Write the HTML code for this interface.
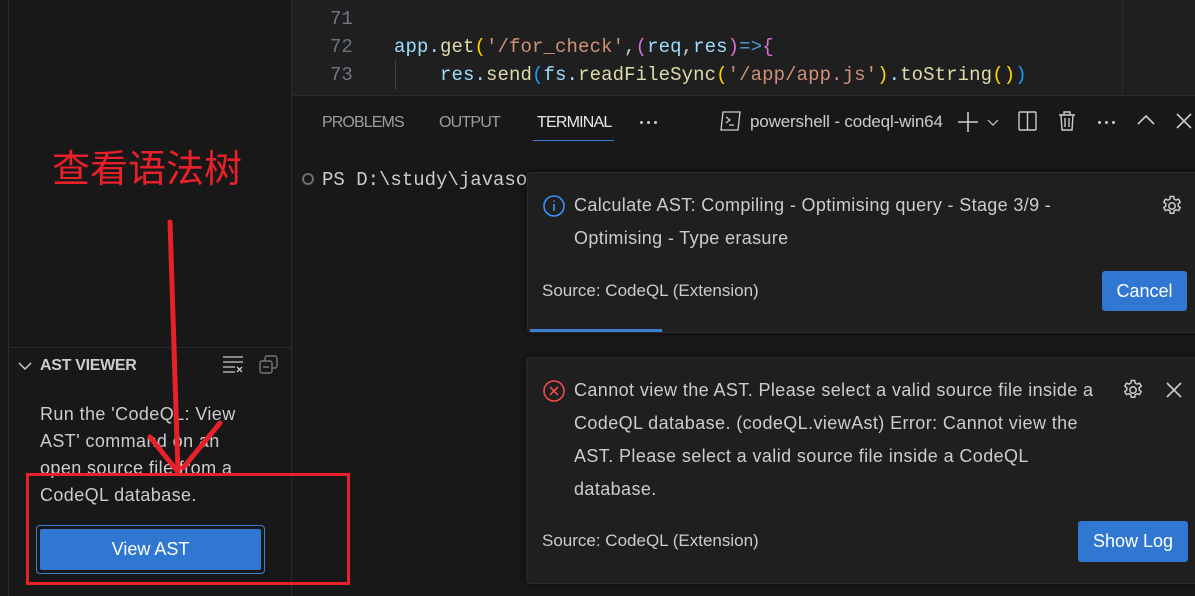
<!DOCTYPE html>
<html><head><meta charset="utf-8"><style>
*{margin:0;padding:0;box-sizing:border-box}
body{width:1195px;height:596px;overflow:hidden;background:#181818;font-family:"Liberation Sans","Noto Sans CJK SC",sans-serif;color:#ccc;position:relative}
.a{position:absolute}
.mono{font-family:"Liberation Mono","DejaVu Sans Mono",monospace;font-size:19px;white-space:pre}
.ui{font-size:18px;white-space:nowrap}
.dots{display:flex;gap:4px}.dots i{width:3px;height:3px;background:#ccc;border-radius:50%;display:block}
</style></head><body>
<div class="a" style="left:0;top:0;width:9px;height:596px;background:#181818;border-right:1px solid #2b2b2b"></div>
<div class="a" style="left:291px;top:0;width:1px;height:596px;background:#2b2b2b"></div>
<!-- editor -->
<div class="a" style="left:292px;top:0;width:903px;height:96px;background:#1f1f1f"></div>
<div class="a" style="left:1122px;top:0;width:1px;height:96px;background:#2b2b2b"></div>
<div class="a mono" style="left:330px;top:5px;color:#6e7681;line-height:28px">71
72
73</div>
<div class="a mono" style="left:394px;top:33px;line-height:28px;color:#9cdcfe;letter-spacing:0.1px">app.<span style="color:#dcdcaa">get</span><span style="color:#ffd700">(</span><span style="color:#ce9178">'/for_check'</span><span style="color:#ccc">,</span><span style="color:#da70d6">(</span>req<span style="color:#ccc">,</span>res<span style="color:#da70d6">)</span><span style="color:#569cd6">=&gt;</span><span style="color:#da70d6">{</span>
    res.<span style="color:#dcdcaa">send</span><span style="color:#179fff">(</span>fs.<span style="color:#dcdcaa">readFileSync</span><span style="color:#ffd700">(</span><span style="color:#ce9178">'/app/app.js'</span><span style="color:#ffd700">)</span>.<span style="color:#dcdcaa">toString</span><span style="color:#ffd700">()</span><span style="color:#179fff">)</span></div>
<div class="a" style="left:395px;top:60px;width:1px;height:30px;background:#404040"></div>
<!-- panel -->
<div class="a" style="left:292px;top:95px;width:903px;height:1px;background:#2b2b2b"></div>
<div class="a ui" style="left:322px;top:114px;font-size:16px;color:#9d9d9d;letter-spacing:-0.9px">PROBLEMS</div>
<div class="a ui" style="left:439px;top:114px;font-size:16px;color:#9d9d9d;letter-spacing:-0.8px">OUTPUT</div>
<div class="a ui" style="left:537px;top:114px;font-size:16px;color:#e7e7e7;letter-spacing:-0.8px">TERMINAL</div>
<div class="a" style="left:533px;top:140px;width:81px;height:1px;background:#3c7ed4"></div>
<div class="a dots" style="left:640px;top:121px"><i></i><i></i><i></i></div>
<svg class="a" style="left:720px;top:110px" width="22" height="22" viewBox="0 0 22 22" fill="none" stroke="#ccc" stroke-width="1.3"><path d="M3 2h17l-2 18H1z"/><path d="M6 7l4 3-4 3M9 15h5"/></svg>
<div class="a ui" style="left:750px;top:112px;font-size:17px;color:#ccc;letter-spacing:-0.15px">powershell - codeql-win64</div>
<svg class="a" style="left:956px;top:110px" width="50" height="22" fill="none" stroke="#ccc" stroke-width="1.6"><path d="M12 2v20M2 12h20"/><path d="M32 10l5 5 5-5" stroke-width="1.2"/></svg>
<svg class="a" style="left:1017px;top:110px" width="22" height="22" fill="none" stroke="#ccc" stroke-width="1.4"><rect x="2" y="2" width="17" height="18" rx="1"/><path d="M10.5 2v18"/></svg>
<svg class="a" style="left:1057px;top:110px" width="20" height="22" fill="none" stroke="#ccc" stroke-width="1.4"><path d="M2 5h16M7 5V2h6v3M4 5l1 15h10l1-15M8 8v9M12 8v9"/></svg>
<div class="a dots" style="left:1098px;top:121px"><i></i><i></i><i></i></div>
<svg class="a" style="left:1136px;top:112px" width="20" height="16" fill="none" stroke="#ccc" stroke-width="1.6"><path d="M2 12l8-8 8 8"/></svg>
<svg class="a" style="left:1175px;top:112px" width="18" height="18" fill="none" stroke="#ccc" stroke-width="1.6"><path d="M2 2l14 14M16 2L2 16"/></svg>
<div class="a" style="left:302px;top:173px;width:12px;height:12px;border:2px solid #6e6e6e;border-radius:50%"></div>
<div class="a mono" style="left:322px;top:169px;color:#ccc">PS D:\study\javasou</div>
<!-- notification 1 -->
<div class="a" style="left:527px;top:172px;width:680px;height:161px;background:#1f1f1f;border:1px solid #2b2b2b;border-radius:4px;box-shadow:0 0 8px rgba(0,0,0,.5);overflow:hidden">
<svg class="a" style="left:14px;top:21px" width="24" height="24" fill="none" stroke="#3794ff" stroke-width="1.6"><circle cx="12" cy="12" r="10"/><path d="M12 10v7M12 6.5v1.5"/></svg>
<div class="a ui" style="left:46px;top:16px;line-height:33px;color:#ccc;letter-spacing:0.35px">Calculate AST: Compiling - Optimising query - Stage 3/9 -<br>Optimising - Type erasure</div>
<div class="a ui" style="left:14px;top:108px;font-size:17px;color:#ccc;letter-spacing:0">Source: CodeQL (Extension)</div>
<div class="a" style="left:574px;top:98px;width:85px;height:40px;background:#2f77d1;border-radius:3px;color:#fff;font-size:18px;line-height:40px;text-align:center">Cancel</div>
<div class="a" style="left:2px;top:156px;width:132px;height:3px;background:#3c7ed4"></div>
</div>
<!-- notification 2 -->
<div class="a" style="left:526px;top:357px;width:680px;height:227px;background:#1f1f1f;border:1px solid #2b2b2b;border-radius:4px;box-shadow:0 0 8px rgba(0,0,0,.5)">
<svg class="a" style="left:15px;top:21px" width="24" height="24" fill="none" stroke="#f14c4c" stroke-width="1.6"><circle cx="12" cy="12" r="10"/><path d="M8 8l8 8M16 8l-8 8"/></svg>
<div class="a ui" style="left:47px;top:16px;line-height:33px;color:#ccc;letter-spacing:0.4px">Cannot view the AST. Please select a valid source file inside a<br>CodeQL database. (codeQL.viewAst) Error: Cannot view the<br>AST. Please select a valid source file inside a CodeQL<br>database.</div>
<div class="a ui" style="left:15px;top:173px;font-size:17px;color:#ccc;letter-spacing:0">Source: CodeQL (Extension)</div>
<div class="a" style="left:551px;top:163px;width:110px;height:41px;background:#2f77d1;border-radius:3px;color:#fff;font-size:18px;line-height:41px;text-align:center">Show Log</div>
<svg class="a" style="left:638px;top:23px" width="18" height="18" fill="none" stroke="#ccc" stroke-width="1.6"><path d="M2 2l14 14M16 2L2 16"/></svg>
</div>
<!-- gears -->
<svg class="a" style="left:1160px;top:194px" width="24" height="24" viewBox="0 0 24 24" fill="none" stroke="#ccc" stroke-width="1.5"><circle cx="12" cy="12" r="3.2"/><path d="M10.3 2.5h3.4l.5 2.6 1.8 1 2.5-.9 1.7 2.9-2 1.7v2.2l2 1.7-1.7 2.9-2.5-.9-1.8 1-.5 2.6h-3.4l-.5-2.6-1.8-1-2.5.9-1.7-2.9 2-1.7v-2.2l-2-1.7 1.7-2.9 2.5.9 1.8-1z"/></svg>
<svg class="a" style="left:1121px;top:378px" width="24" height="24" viewBox="0 0 24 24" fill="none" stroke="#ccc" stroke-width="1.5"><circle cx="12" cy="12" r="3.2"/><path d="M10.3 2.5h3.4l.5 2.6 1.8 1 2.5-.9 1.7 2.9-2 1.7v2.2l2 1.7-1.7 2.9-2.5-.9-1.8 1-.5 2.6h-3.4l-.5-2.6-1.8-1-2.5.9-1.7-2.9 2-1.7v-2.2l-2-1.7 1.7-2.9 2.5.9 1.8-1z"/></svg>
<!-- sidebar -->
<div class="a" style="left:10px;top:347px;width:281px;height:1px;background:#2b2b2b"></div>
<svg class="a" style="left:17px;top:359px" width="16" height="14" fill="none" stroke="#ccc" stroke-width="1.5"><path d="M2 4l6 6 6-6"/></svg>
<div class="a ui" style="left:40px;top:357px;font-size:16px;font-weight:bold;color:#ccc;letter-spacing:-0.3px">AST VIEWER</div>
<svg class="a" style="left:222px;top:354px" width="24" height="20" fill="none" stroke="#ccc" stroke-width="1.3"><path d="M1 3h20M1 8h20M1 13h12M1 18h12M15 13l5 5M20 13l-5 5"/></svg>
<svg class="a" style="left:259px;top:355px" width="20" height="20" fill="none" stroke="#777" stroke-width="1.4"><rect x="1" y="6" width="12" height="12" rx="2"/><path d="M6 6V3a2 2 0 012-2h8a2 2 0 012 2v8a2 2 0 01-2 2h-3M4 12h6"/></svg>
<div class="a ui" style="left:40px;top:401px;font-size:18px;line-height:27px;color:#ccc;letter-spacing:0.4px">Run the 'CodeQL: View<br>AST' command on an<br>open source file from a<br>CodeQL database.</div>
<div class="a" style="left:36px;top:525px;width:229px;height:49px;border:1px solid #3c7ed4;border-radius:4px"></div>
<div class="a" style="left:40px;top:529px;width:221px;height:41px;background:#2f77d1;border-radius:2px;color:#fff;font-size:18px;line-height:41px;text-align:center">View AST</div>
<!-- annotations -->
<div class="a" style="left:52px;top:143px;font-family:'Noto Sans CJK SC',sans-serif;font-size:38px;color:#e8202a;line-height:46px">查看语法树</div>
<div class="a" style="left:26px;top:473px;width:324px;height:112px;border:3px solid #e8202a"></div>
<svg class="a" style="left:0;top:0" width="300" height="500" fill="none" stroke="#e8202a" stroke-width="5" stroke-linecap="round"><path d="M170 222L178 472M150 437L178 472M220 423L183 468"/></svg>
</body></html>
